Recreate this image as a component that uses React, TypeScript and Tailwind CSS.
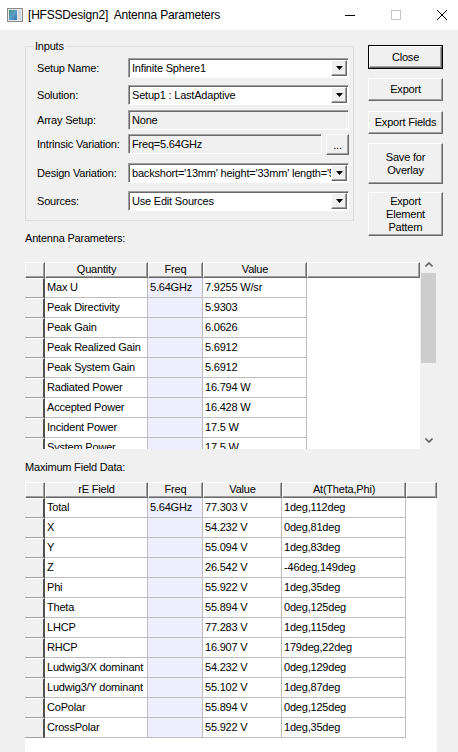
import React from 'react';

const ui = "font-['Liberation_Sans',Arial,sans-serif] text-[11px] tracking-[-0.2px] text-black";

const antennaRows: [string, string, string][] = [
  ['Max U', '5.64GHz', '7.9255 W/sr'],
  ['Peak Directivity', '', '5.9303'],
  ['Peak Gain', '', '6.0626'],
  ['Peak Realized Gain', '', '5.6912'],
  ['Peak System Gain', '', '5.6912'],
  ['Radiated Power', '', '16.794 W'],
  ['Accepted Power', '', '16.428 W'],
  ['Incident Power', '', '17.5 W'],
  ['System Power', '', '17.5 W'],
];

const fieldRows: [string, string, string, string][] = [
  ['Total', '5.64GHz', '77.303 V', '1deg,112deg'],
  ['X', '', '54.232 V', '0deg,81deg'],
  ['Y', '', '55.094 V', '1deg,83deg'],
  ['Z', '', '26.542 V', '-46deg,149deg'],
  ['Phi', '', '55.922 V', '1deg,35deg'],
  ['Theta', '', '55.894 V', '0deg,125deg'],
  ['LHCP', '', '77.283 V', '1deg,115deg'],
  ['RHCP', '', '16.907 V', '179deg,22deg'],
  ['Ludwig3/X dominant', '', '54.232 V', '0deg,129deg'],
  ['Ludwig3/Y dominant', '', '55.102 V', '1deg,87deg'],
  ['CoPolar', '', '55.894 V', '0deg,125deg'],
  ['CrossPolar', '', '55.922 V', '1deg,35deg'],
];

const DropArrow = () => (
  <div className="w-[16px] h-full shrink-0 bg-[#f0f0f0] border-t border-l border-t-white border-l-white border-r border-b border-r-[#696969] border-b-[#696969] shadow-[inset_-1px_-1px_0_#a0a0a0] flex items-center justify-center">
    <svg width="7" height="4" viewBox="0 0 7 4">
      <polygon points="0,0 7,0 3.5,4" fill="#000" />
    </svg>
  </div>
);

const Combo = ({ value }: { value: string }) => (
  <div className="w-[221px] h-[20px] bg-white border-t border-l border-t-[#a0a0a0] border-l-[#a0a0a0] border-r border-b border-r-white border-b-white shadow-[inset_1px_1px_0_#696969] flex items-stretch pl-[3px] pt-[1px] pr-[1px] pb-[1px]">
    <div className="flex-1 overflow-hidden whitespace-nowrap leading-[17px]">{value}</div>
    <DropArrow />
  </div>
);

const ReadField = ({ value, width }: { value: string; width: string }) => (
  <div className={`${width} h-[20px] bg-[#f0f0f0] border-t border-l border-t-[#a0a0a0] border-l-[#a0a0a0] border-r border-b border-r-white border-b-white shadow-[inset_1px_1px_0_#696969] pl-[3px] leading-[18px] whitespace-nowrap overflow-hidden`}>
    {value}
  </div>
);

const Field = ({ label, children, className }: { label: string; children: React.ReactNode; className: string }) => (
  <div className={`flex items-center h-[20px] ${className}`}>
    <div className="w-[91px] shrink-0">{label}</div>
    {children}
  </div>
);

const Button = ({ children, h, isDefault }: { children: React.ReactNode; h: string; isDefault?: boolean }) => (
  <div className={`w-[75px] ${h} ${isDefault ? 'border border-[#000]' : ''}`}>
    <div className="w-full h-full bg-[#f0f0f0] border-t border-l border-t-white border-l-white border-r border-b border-r-[#696969] border-b-[#696969] shadow-[inset_-1px_-1px_0_#a0a0a0] flex items-center justify-center text-center leading-[13px]">
      {children}
    </div>
  </div>
);

const HeadCell = ({ w, children }: { w: string; children?: React.ReactNode }) => (
  <div className={`${w} h-[16px] shrink-0 bg-[#f0f0f0] border-t border-l border-t-white border-l-white border-r border-b border-r-[#696969] border-b-[#696969] shadow-[inset_-1px_-1px_0_#a0a0a0] text-center leading-[12px] whitespace-nowrap overflow-hidden`}>
    {children}
  </div>
);

const RowHead = () => (
  <div className="w-[20px] h-[20px] shrink-0 bg-[#f0f0f0] border-t border-t-white border-b border-b-[#a0a0a0] border-r-2 border-r-[#505050]" />
);

const Cell = ({ w, children, freq }: { w: string; children?: React.ReactNode; freq?: boolean }) => (
  <div className={`${w} h-[20px] shrink-0 border-r border-b border-[#bdbdbd] pl-[2px] leading-[19px] whitespace-nowrap overflow-hidden ${freq ? 'bg-[#eeeefc]' : 'bg-white'}`}>
    {children}
  </div>
);

const ScrollArrow = ({ up }: { up?: boolean }) => (
  <div className="h-[17px] flex items-center justify-center">
    <svg width="8" height="5" viewBox="0 0 8 5">
      <polyline points={up ? '0.5,4.5 4,1 7.5,4.5' : '0.5,0.5 4,4 7.5,0.5'} fill="none" stroke="#606060" strokeWidth="1.6" />
    </svg>
  </div>
);

export default function App() {
  return (
    <div className={`w-[458px] h-[752px] overflow-hidden flex flex-col bg-[#f0f0f0] ${ui}`}>
      {/* title bar */}
      <div className="h-[30px] shrink-0 bg-white flex items-center">
        <svg className="ml-[7px]" width="16" height="14" viewBox="0 0 16 14">
          <rect x="0.5" y="0.5" width="15" height="13" fill="#e8e8e8" stroke="#8a8a8a" />
          <rect x="2" y="2" width="8" height="10" fill="url(#g)" />
          <rect x="11" y="2" width="3" height="10" fill="#cfd6dc" />
          <defs>
            <linearGradient id="g" x1="0" y1="0" x2="1" y2="1">
              <stop offset="0" stopColor="#3e8f7a" />
              <stop offset="0.5" stopColor="#5aa0c8" />
              <stop offset="1" stopColor="#2f6fb0" />
            </linearGradient>
          </defs>
        </svg>
        <div className="ml-[5px] text-[12px] whitespace-pre">[HFSSDesign2]  Antenna Parameters</div>
        <div className="ml-auto mr-[11px] flex items-center gap-[36px]">
          <div className="w-[10px] h-px bg-black" />
          <div className="w-[10px] h-[10px] border border-[#c4c4c4]" />
          <svg width="10" height="10" viewBox="0 0 10 10">
            <path d="M0 0 L10 10 M10 0 L0 10" stroke="#000" strokeWidth="1" />
          </svg>
        </div>
      </div>

      <div className="flex-1 flex flex-col pl-[25px]">
        <div className="flex">
          <div className="w-[329px] flex flex-col">
            <div className="relative mt-[16px] h-[175px] border border-[#dcdcdc] pt-[11px] pl-[11px]">
              <div className="absolute -top-[8px] left-[8px] bg-[#f0f0f0] px-[1px] leading-[14px]">Inputs</div>
              <Field label="Setup Name:" className="">
                <Combo value="Infinite Sphere1" />
              </Field>
              <Field label="Solution:" className="mt-[7px]">
                <Combo value="Setup1 : LastAdaptive" />
              </Field>
              <Field label="Array Setup:" className="mt-[5px]">
                <ReadField value="None" width="w-[221px]" />
              </Field>
              <Field label="Intrinsic Variation:" className="mt-[4px]">
                <ReadField value="Freq=5.64GHz" width="w-[194px]" />
                <div className="ml-[4px] w-[23px] h-[21px] bg-[#f0f0f0] border-t border-l border-t-white border-l-white border-r border-b border-r-[#696969] border-b-[#696969] shadow-[inset_-1px_-1px_0_#a0a0a0] flex items-end justify-center leading-[14px] pb-[2px]">
                  ...
                </div>
              </Field>
              <Field label="Design Variation:" className="mt-[9px]">
                <Combo value="backshort='13mm' height='33mm' length='5mm'" />
              </Field>
              <Field label="Sources:" className="mt-[8px]">
                <Combo value="Use Edit Sources" />
              </Field>
            </div>
            <div className="mt-[10px] h-[14px] leading-[14px]">Antenna Parameters:</div>
          </div>

          <div className="ml-[14px] mt-[15px] flex flex-col">
            <Button h="h-[24px]" isDefault>Close</Button>
            <div className="mt-[9px]"><Button h="h-[23px]">Export</Button></div>
            <div className="mt-[10px]"><Button h="h-[23px]">Export Fields</Button></div>
            <div className="mt-[9px]"><Button h="h-[41px]">Save for<br />Overlay</Button></div>
            <div className="mt-[8px]"><Button h="h-[44px]">Export<br />Element<br />Pattern</Button></div>
          </div>
        </div>

        {/* antenna parameters grid */}
        <div className="mt-[11px] flex items-start">
          <div className="mt-[6px] w-[395px] h-[187px] bg-white overflow-hidden flex flex-col">
            <div className="flex">
              <HeadCell w="w-[20px]" />
              <HeadCell w="w-[103px]">Quantity</HeadCell>
              <HeadCell w="w-[55px]">Freq</HeadCell>
              <HeadCell w="w-[104px]">Value</HeadCell>
              <HeadCell w="w-[113px]" />
            </div>
            {antennaRows.map(([q, f, v]) => (
              <div key={q} className="flex">
                <RowHead />
                <Cell w="w-[103px]">{q}</Cell>
                <Cell w="w-[55px]" freq>{f}</Cell>
                <Cell w="w-[104px]">{v}</Cell>
              </div>
            ))}
          </div>
          <div className="w-[17px] h-[193px] flex flex-col bg-[#f0f0f0]">
            <ScrollArrow up />
            <div className="flex-1 flex flex-col">
              <div className="mx-[1px] h-[90px] bg-[#cdcdcd]" />
            </div>
            <ScrollArrow />
          </div>
        </div>

        <div className="mt-[11px] h-[14px] leading-[14px]">Maximum Field Data:</div>

        {/* maximum field data grid */}
        <div className="mt-[8px] w-[412px] flex-1 bg-white overflow-hidden flex flex-col">
          <div className="flex">
            <HeadCell w="w-[20px]" />
            <HeadCell w="w-[103px]">rE Field</HeadCell>
            <HeadCell w="w-[55px]">Freq</HeadCell>
            <HeadCell w="w-[79px]">Value</HeadCell>
            <HeadCell w="w-[124px]">At(Theta,Phi)</HeadCell>
            <HeadCell w="w-[31px]" />
          </div>
          {fieldRows.map(([n, f, v, a]) => (
            <div key={n} className="flex">
              <RowHead />
              <Cell w="w-[103px]">{n}</Cell>
              <Cell w="w-[55px]" freq>{f}</Cell>
              <Cell w="w-[79px]">{v}</Cell>
              <Cell w="w-[124px]">{a}</Cell>
            </div>
          ))}
        </div>
      </div>
    </div>
  );
}
